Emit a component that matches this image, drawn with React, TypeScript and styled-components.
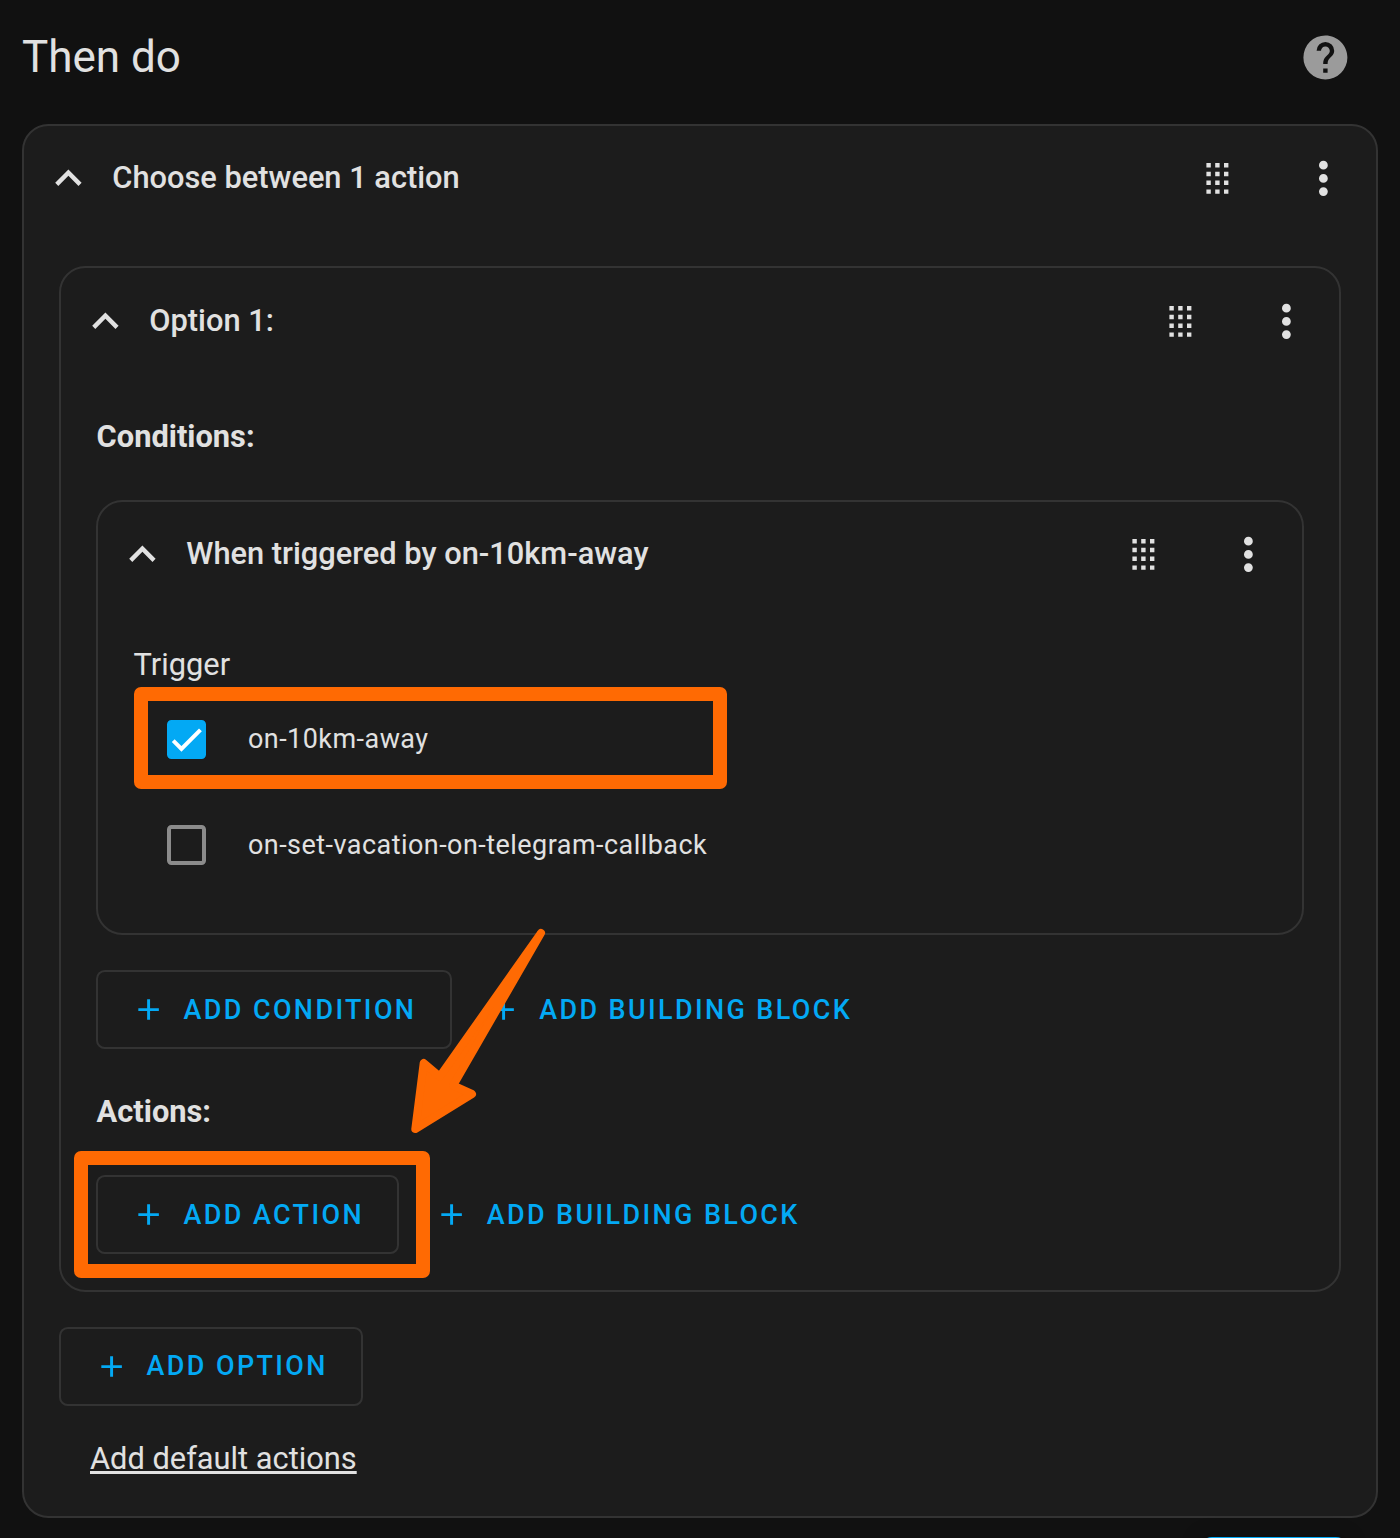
import React from "react";
import styled, { createGlobalStyle, css } from "styled-components";

const ACCENT = "#03a9f4";
const TEXT = "#e1e1e1";
const DIVIDER = "#333333";
const MARKER = "#ff6a03";

const Global = createGlobalStyle`
  *, *::before, *::after { box-sizing: border-box; }
  html, body { margin: 0; background: #111111; }
  body { overflow: hidden; }
`;

const Page = styled.main`
  position: relative;
  width: 1400px;
  height: 1538px;
  padding: 0 22px;
  overflow: hidden;
  background: #111111;
  color: ${TEXT};
  font-family: Roboto, "Noto Sans", sans-serif;
  font-size: 30.8px;
  line-height: 44px;
  -webkit-font-smoothing: antialiased;
`;

const PageHeader = styled.header`
  display: flex;
  align-items: center;
  justify-content: space-between;
  height: 124px;
  padding: 0 26px 9px 0;
`;

const PageTitle = styled.h2`
  margin: 0 0 2px;
  font-size: 44px;
  font-weight: 400;
  line-height: 60px;
`;

const IconSvg = styled.svg<{ $size: number }>`
  display: block;
  flex: none;
  width: ${(p) => p.$size}px;
  height: ${(p) => p.$size}px;
  fill: currentColor;
`;

const HelpButton = styled.a`
  display: flex;
  color: #9b9b9b;
`;

const Card = styled.section`
  border: 2px solid ${DIVIDER};
  border-radius: 26.4px;
  background: #1c1c1c;
`;

const CardHeader = styled.div<{ $height: number; $inset: number }>`
  display: flex;
  align-items: center;
  height: ${(p) => p.$height}px;
  padding: 0 ${(p) => p.$inset}px 0 18px;
`;

const CardTitle = styled.h3`
  flex: 1;
  margin: 0 0 2px 17.5px;
  font-size: 30.8px;
  font-weight: 500;
  line-height: 44px;
`;

const HeaderActions = styled.div<{ $gap: number }>`
  display: flex;
  align-items: center;
  gap: ${(p) => p.$gap}px;
`;

const CardBody = styled.div<{ $bottom: number }>`
  padding: 35px 35px ${(p) => p.$bottom}px;
`;

const SectionLabel = styled.h4<{ $before: number; $after: number }>`
  margin: ${(p) => p.$before}px 0 ${(p) => p.$after}px 0.6px;
  font-size: 30.8px;
  font-weight: 700;
  line-height: 44px;
`;

const FieldLabel = styled.div`
  height: 45px;
  padding: 1px 0 0 0.6px;
`;

const OptionRow = styled.label<{ $height: number }>`
  display: flex;
  align-items: center;
  gap: 41.6px;
  height: ${(p) => p.$height}px;
  padding-left: 34px;
  font-size: 26.95px;
  letter-spacing: 0.48px;
`;

const OptionText = styled.span`
  margin-bottom: 0.8px;
`;

const CheckSquare = styled.span<{ $checked?: boolean }>`
  display: flex;
  flex: none;
  align-items: center;
  justify-content: center;
  width: 39.4px;
  height: 39.4px;
  border: 4px solid #8b8b8b;
  border-radius: 4.4px;
  color: #ffffff;
  ${(p) =>
    p.$checked &&
    css`
      border-color: ${ACCENT};
      background: ${ACCENT};
    `}
`;

const CheckMark = styled.svg`
  display: block;
  flex: none;
  width: 31px;
  height: 31px;
  fill: none;
  stroke: currentColor;
  stroke-width: 3.12;
`;

const ButtonRow = styled.div<{ $top?: number }>`
  display: flex;
  margin-top: ${(p) => p.$top ?? 0}px;
`;

const Button = styled.button<{ $outlined?: boolean }>`
  display: flex;
  align-items: center;
  gap: 17.7px;
  height: 79px;
  margin: 0;
  padding: 0 33.2px 0 32.7px;
  border: 2px solid ${(p) => (p.$outlined ? DIVIDER : "transparent")};
  border-radius: 8.8px;
  background: transparent;
  color: ${ACCENT};
  font-family: inherit;
  font-size: 26.95px;
  font-weight: 500;
  letter-spacing: 2.406px;
  line-height: 44px;
  text-transform: uppercase;
  white-space: nowrap;
`;

const ButtonLabel = styled.span`
  padding-top: 0.4px;
`;

const DefaultLink = styled.a`
  display: block;
  width: max-content;
  margin: 31px 0 0 31px;
  color: inherit;
  text-decoration: underline;
`;

const Highlight = styled.div<{ $x: number; $y: number; $w: number; $h: number }>`
  position: absolute;
  left: ${(p) => p.$x}px;
  top: ${(p) => p.$y}px;
  width: ${(p) => p.$w}px;
  height: ${(p) => p.$h}px;
  border: 14px solid ${MARKER};
  border-radius: 7px;
  pointer-events: none;
`;

const Arrow = styled.svg`
  position: absolute;
  left: 400px;
  top: 920px;
  width: 160px;
  height: 220px;
  fill: ${MARKER};
  stroke: ${MARKER};
  stroke-width: 8;
  stroke-linejoin: round;
  pointer-events: none;
`;

const SaveButton = styled.div`
  position: absolute;
  left: 1200px;
  top: 1537px;
  width: 148px;
  height: 40px;
  border-radius: 12px;
  background: ${ACCENT};
  box-shadow: 0 0 20px rgba(0, 0, 0, 0.25);
`;

const icons = {
  chevronUp:
    "M7.41,15.41L12,10.83L16.59,15.41L18,14L12,8L6,14L7.41,15.41Z",
  drag: "M7,19V17H9V19H7M11,19V17H13V19H11M15,19V17H17V19H15M7,15V13H9V15H7M11,15V13H13V15H11M15,15V13H17V15H15M7,11V9H9V11H7M11,11V9H13V11H11M15,11V9H17V11H15M7,7V5H9V7H7M11,7V5H13V7H11M15,7V5H17V7H15Z",
  dots: "M12,16A2,2 0 0,1 14,18A2,2 0 0,1 12,20A2,2 0 0,1 10,18A2,2 0 0,1 12,16M12,10A2,2 0 0,1 14,12A2,2 0 0,1 12,14A2,2 0 0,1 10,12A2,2 0 0,1 12,10M12,4A2,2 0 0,1 14,6A2,2 0 0,1 12,8A2,2 0 0,1 10,6A2,2 0 0,1 12,4Z",
  help: "M15.07,11.25L14.17,12.17C13.45,12.89 13,13.5 13,15H11V14.5C11,13.39 11.45,12.39 12.17,11.67L13.41,10.41C13.78,10.05 14,9.55 14,9C14,7.89 13.1,7 12,7A2,2 0 0,0 10,9H8A4,4 0 0,1 12,5A4,4 0 0,1 16,9C16,9.88 15.64,10.67 15.07,11.25M13,19H11V17H13M12,2A10,10 0 0,0 2,12A10,10 0 0,0 12,22A10,10 0 0,0 22,12C22,6.47 17.5,2 12,2Z",
  plus: "M19,13H13V19H11V13H5V11H11V5H13V11H19V13Z",
};

function Icon({ name, size = 52.8 }: { name: keyof typeof icons; size?: number }) {
  return (
    <IconSvg $size={size} viewBox="0 0 24 24" aria-hidden="true">
      <path d={icons[name]} />
    </IconSvg>
  );
}

interface PanelProps {
  title: string;
  headerHeight?: number;
  inset?: number;
  bottom?: number;
  children: React.ReactNode;
}

function Panel({ title, headerHeight = 105, inset = 26, bottom = 35, children }: PanelProps) {
  return (
    <Card>
      <CardHeader $height={headerHeight} $inset={inset}>
        <Icon name="chevronUp" />
        <CardTitle>{title}</CardTitle>
        <HeaderActions $gap={79 - inset}>
          <Icon name="drag" />
          <Icon name="dots" />
        </HeaderActions>
      </CardHeader>
      <CardBody $bottom={bottom}>{children}</CardBody>
    </Card>
  );
}

function AddButton({ label, outlined }: { label: string; outlined?: boolean }) {
  return (
    <Button type="button" $outlined={outlined}>
      <Icon name="plus" size={35.2} />
      <ButtonLabel>{label}</ButtonLabel>
    </Button>
  );
}

export default function App() {
  return (
    <>
      <Global />
      <Page>
        <PageHeader>
          <PageTitle>Then do</PageTitle>
          <HelpButton>
            <Icon name="help" />
          </HelpButton>
        </PageHeader>

        <Panel title="Choose between 1 action">
          <Panel title="Option 1:" headerHeight={107} bottom={35.6}>
            <SectionLabel $before={5} $after={41}>
              Conditions:
            </SectionLabel>
            <Panel title="When triggered by on-10km-away" inset={27}>
              <FieldLabel>Trigger</FieldLabel>
              <OptionRow $height={105}>
                <CheckSquare $checked>
                  <CheckMark viewBox="0 0 24 24">
                    <path d="M1.73,12.91 8.1,19.28 22.79,4.59" />
                  </CheckMark>
                </CheckSquare>
                <OptionText>on-10km-away</OptionText>
              </OptionRow>
              <OptionRow $height={106}>
                <CheckSquare />
                <OptionText>on-set-vacation-on-telegram-callback</OptionText>
              </OptionRow>
            </Panel>
            <ButtonRow $top={35}>
              <AddButton label="Add condition" outlined />
              <AddButton label="Add building block" />
            </ButtonRow>
            <SectionLabel $before={41} $after={41}>
              Actions:
            </SectionLabel>
            <ButtonRow>
              <AddButton label="Add action" outlined />
              <AddButton label="Add building block" />
            </ButtonRow>
          </Panel>
          <ButtonRow $top={35}>
            <AddButton label="Add option" outlined />
          </ButtonRow>
          <DefaultLink>Add default actions</DefaultLink>
        </Panel>

        <Highlight $x={134} $y={687} $w={593} $h={102.3} />
        <Highlight $x={74} $y={1151} $w={356.3} $h={127.3} />
        <Arrow viewBox="400 920 160 220">
          <path d="M541,933L439.7,1076.6L423.7,1063L415.3,1129L472,1094L453.1,1085.5Z" />
        </Arrow>
        <SaveButton />
      </Page>
    </>
  );
}
